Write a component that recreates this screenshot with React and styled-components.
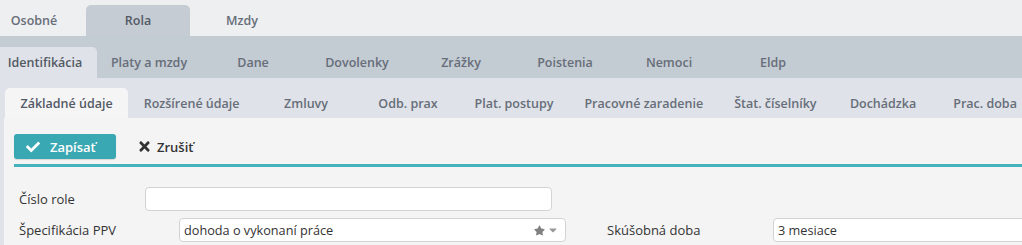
import React from "react";
import styled, { createGlobalStyle } from "styled-components";
import { FaCheck, FaTimes, FaStar, FaCaretDown } from "react-icons/fa";

const GlobalStyle = createGlobalStyle`
  html, body { margin: 0; padding: 0; }
  body {
    background: #eeeff1;
    font-family: "Open Sans", "Liberation Sans", sans-serif;
    font-size: 13px;
    overflow: hidden;
  }
`;

const Page = styled.div`
  width: 1022px;
  height: 245px;
  overflow: hidden;
  display: flex;
  flex-direction: column;
`;

const TabStrip = styled.div`
  display: flex;
  align-items: flex-end;
  background: ${(p) => p.$bg};
  height: ${(p) => p.$height}px;
  margin-left: ${(p) => p.$shift || 0}px;
  flex-shrink: 0;
`;

const Tab = styled.div`
  box-sizing: border-box;
  flex-shrink: 0;
  height: ${(p) => p.$h}px;
  min-width: ${(p) => p.$minWidth}px;
  padding: 0 ${(p) => p.$pad || 0}px;
  display: flex;
  align-items: center;
  justify-content: center;
  white-space: nowrap;
  font-size: 12.5px;
  font-weight: 600;
  color: ${(p) => (p.$active ? "#535a65" : "#676e79")};
  background: ${(p) => (p.$active ? p.$activeBg : "transparent")};
  border-radius: 5px 5px 0 0;
  margin-left: ${(p) => p.$ml || 0}px;
`;

const Lower = styled.div`
  background: #dfe2e8;
  padding-left: 4px;
  display: flex;
  flex-direction: column;
  flex: 1;
  min-width: 0;
`;

const Panel = styled.div`
  background: #f4f4f5;
  flex: 1;
  padding: 16px 0 0 10px;
`;

const Toolbar = styled.div`
  display: flex;
  align-items: center;
  gap: 21px;
  padding-bottom: 5px;
  border-bottom: 3px solid #45b3bc;
`;

const PrimaryButton = styled.button`
  box-sizing: border-box;
  height: 25px;
  width: 102px;
  border: none;
  border-radius: 3px;
  background: #3aa8b2;
  color: #fff;
  font-family: inherit;
  font-size: 13px;
  font-weight: 600;
  display: flex;
  align-items: center;
  padding: 0 0 0 12px;
  gap: 10px;
  box-shadow: 0 1px 1px rgba(0, 0, 0, 0.12);
  svg { width: 14px; height: 14px; }
`;

const LinkButton = styled.button`
  border: none;
  background: transparent;
  color: #333;
  font-family: inherit;
  font-size: 13px;
  font-weight: 600;
  display: flex;
  align-items: center;
  gap: 5px;
  padding: 0;
  svg { width: 15px; height: 15px; color: #333; }
`;

const Form = styled.div`
  display: flex;
  flex-direction: column;
  gap: 7px;
  padding: 20px 0 0 5px;
`;

const Row = styled.div`
  display: flex;
  align-items: center;
`;

const Label = styled.label`
  width: ${(p) => p.$w}px;
  flex-shrink: 0;
  color: #333;
  font-size: 13px;
  margin-left: ${(p) => p.$ml || 0}px;
`;

const Field = styled.div`
  box-sizing: border-box;
  height: 24px;
  width: ${(p) => (p.$w ? `${p.$w}px` : "auto")};
  flex: ${(p) => (p.$w ? "none" : "1")};
  margin-right: ${(p) => (p.$w ? 0 : -20)}px;
  background: #fff;
  border: 1px solid #d3d3d3;
  border-radius: 4px;
  display: flex;
  align-items: center;
  padding: 0 6px 0 4px;
  color: #333;
  font-size: 12.7px;
`;

const Value = styled.span`
  flex: 1;
  white-space: nowrap;
`;

const SelectIcons = styled.span`
  display: flex;
  align-items: center;
  gap: 2px;
  color: #808080;
  svg:first-child { width: 11px; height: 11px; }
  svg:last-child { width: 12px; height: 12px; color: #999; }
`;

const top = ["Osobné", "Rola", "Mzdy"];
const second = ["Identifikácia", "Platy a mzdy", "Dane", "Dovolenky", "Zrážky", "Poistenia", "Nemoci", "Eldp"];
const third = [
  "Základné údaje",
  "Rozšírené údaje",
  "Zmluvy",
  "Odb. prax",
  "Plat. postupy",
  "Pracovné zaradenie",
  "Štat. číselníky",
  "Dochádzka",
  "Prac. doba",
];

export default function App() {
  return (
    <Page>
      <GlobalStyle />
      <TabStrip $bg="#eeeff1" $height={36} $shift={-18}>
        {top.map((t, i) => (
          <Tab key={t} $h={31} $minWidth={104} $active={i === 1} $activeBg="#c5ccd4">
            {t}
          </Tab>
        ))}
      </TabStrip>
      <TabStrip $bg="#c3cbd3" $height={42} $shift={-7}>
        {second.map((t, i) => (
          <Tab key={t} $h={31} $minWidth={104} $active={i === 0} $activeBg="#dfe2e8">
            {t}
          </Tab>
        ))}
      </TabStrip>
      <Lower>
        <TabStrip $bg="#dfe2e8" $height={40}>
          {third.map((t, i) => (
            <Tab
              key={t}
              $h={30}
              $minWidth={102}
              $pad={15.5}
              $ml={i === 0 ? 1 : 0}
              $active={i === 0}
              $activeBg="#f5f5f6"
            >
              {t}
            </Tab>
          ))}
        </TabStrip>
        <Panel>
          <Toolbar>
            <PrimaryButton>
              <FaCheck />
              Zapísať
            </PrimaryButton>
            <LinkButton>
              <FaTimes />
              Zrušiť
            </LinkButton>
          </Toolbar>
          <Form>
            <Row>
              <Label $w={126}>Číslo role</Label>
              <Field $w={407} />
            </Row>
            <Row>
              <Label $w={160}>Špecifikácia PPV</Label>
              <Field $w={387}>
                <Value>dohoda o vykonaní práce</Value>
                <SelectIcons>
                  <FaStar />
                  <FaCaretDown />
                </SelectIcons>
              </Field>
              <Label $w={166} $ml={41}>Skúšobná doba</Label>
              <Field>
                <Value>3 mesiace</Value>
              </Field>
            </Row>
          </Form>
        </Panel>
      </Lower>
    </Page>
  );
}
